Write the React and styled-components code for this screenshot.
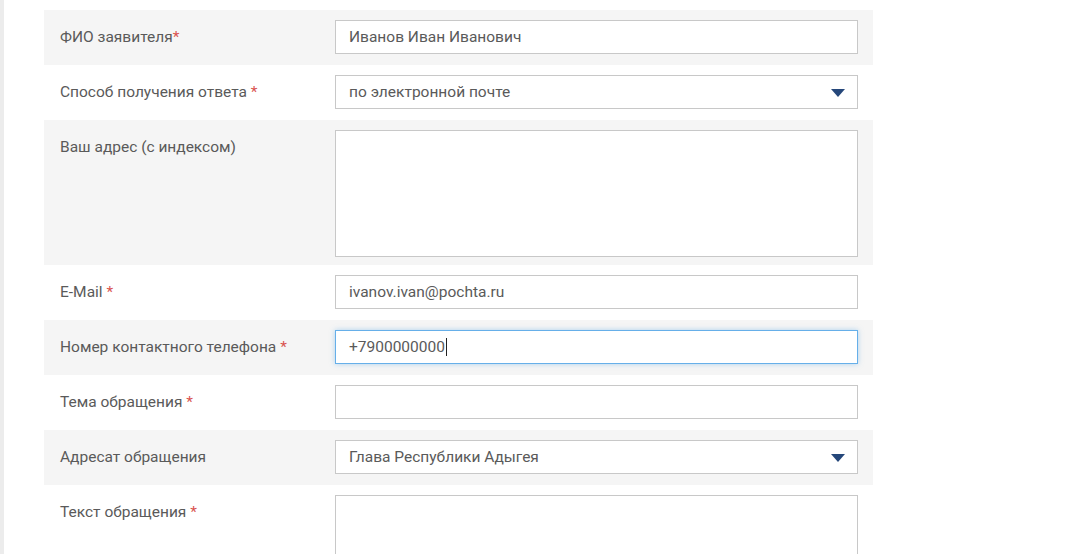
import React from 'react';
import styled, { createGlobalStyle } from 'styled-components';

const Global = createGlobalStyle`
  body { margin: 0; background: #fff; font-family: Roboto, "Liberation Sans", sans-serif; }
`;

const Page = styled.div`
  height: 554px;
  overflow: hidden;
  border-left: 4px solid #ececec;
  padding: 10px 0 0 40px;
`;

const Form = styled.div`
  width: 829px;
`;

const Row = styled.div`
  display: grid;
  grid-template-columns: 275px 523px;
  align-items: start;
  padding: 10px 15px 10px 16px;
  height: 35px;
  height: ${p => (p.$tall ? 125 : 35)}px;
  background: ${p => (p.$alt ? '#f5f5f5' : '#fff')};
`;

const Label = styled.div`
  font-size: 15.5px;
  color: #5a5a5a;
  line-height: 34px;
`;

const Star = styled.span`
  color: #d9534f;
`;

const Field = styled.div`
  position: relative;
  box-sizing: border-box;
  height: ${p => (p.$tall ? 127 : 34)}px;
  border: 1px solid ${p => (p.$focus ? '#66afe9' : '#c8c8c8')};
  box-shadow: ${p => (p.$focus ? '0 0 5px rgba(102,175,233,0.5)' : 'none')};
  background: #fff;
  padding: 0 13px;
  font-size: 15.5px;
  line-height: 32px;
  color: #5a5a5a;
`;

const Arrow = styled.span`
  position: absolute;
  right: 12px;
  top: 13px;
  border-left: 7px solid transparent;
  border-right: 7px solid transparent;
  border-top: 8px solid #25477a;
`;

const Caret = styled.span`
  border-right: 1px solid #222;
  margin-left: 1px;
`;

const rows = [
  { label: 'ФИО заявителя', star: true, tight: true, value: 'Иванов Иван Иванович' },
  { label: 'Способ получения ответа', star: true, value: 'по электронной почте', select: true },
  { label: 'Ваш адрес (с индексом)', tall: true },
  { label: 'E-Mail', star: true, value: 'ivanov.ivan@pochta.ru' },
  { label: 'Номер контактного телефона', star: true, value: '+7900000000', focus: true },
  { label: 'Тема обращения', star: true },
  { label: 'Адресат обращения', value: 'Глава Республики Адыгея', select: true },
  { label: 'Текст обращения', star: true, tall: true },
];

export default function App() {
  return (
    <>
      <Global />
      <Page>
        <Form>
          {rows.map((r, i) => (
            <Row key={r.label} $alt={i % 2 === 0} $tall={r.tall}>
              <Label>
                {r.label}
                {r.star && <Star>{r.tight ? '*' : ' *'}</Star>}
              </Label>
              <Field $tall={r.tall} $focus={r.focus}>
                {r.value}
                {r.focus && <Caret />}
                {r.select && <Arrow />}
              </Field>
            </Row>
          ))}
        </Form>
      </Page>
    </>
  );
}
